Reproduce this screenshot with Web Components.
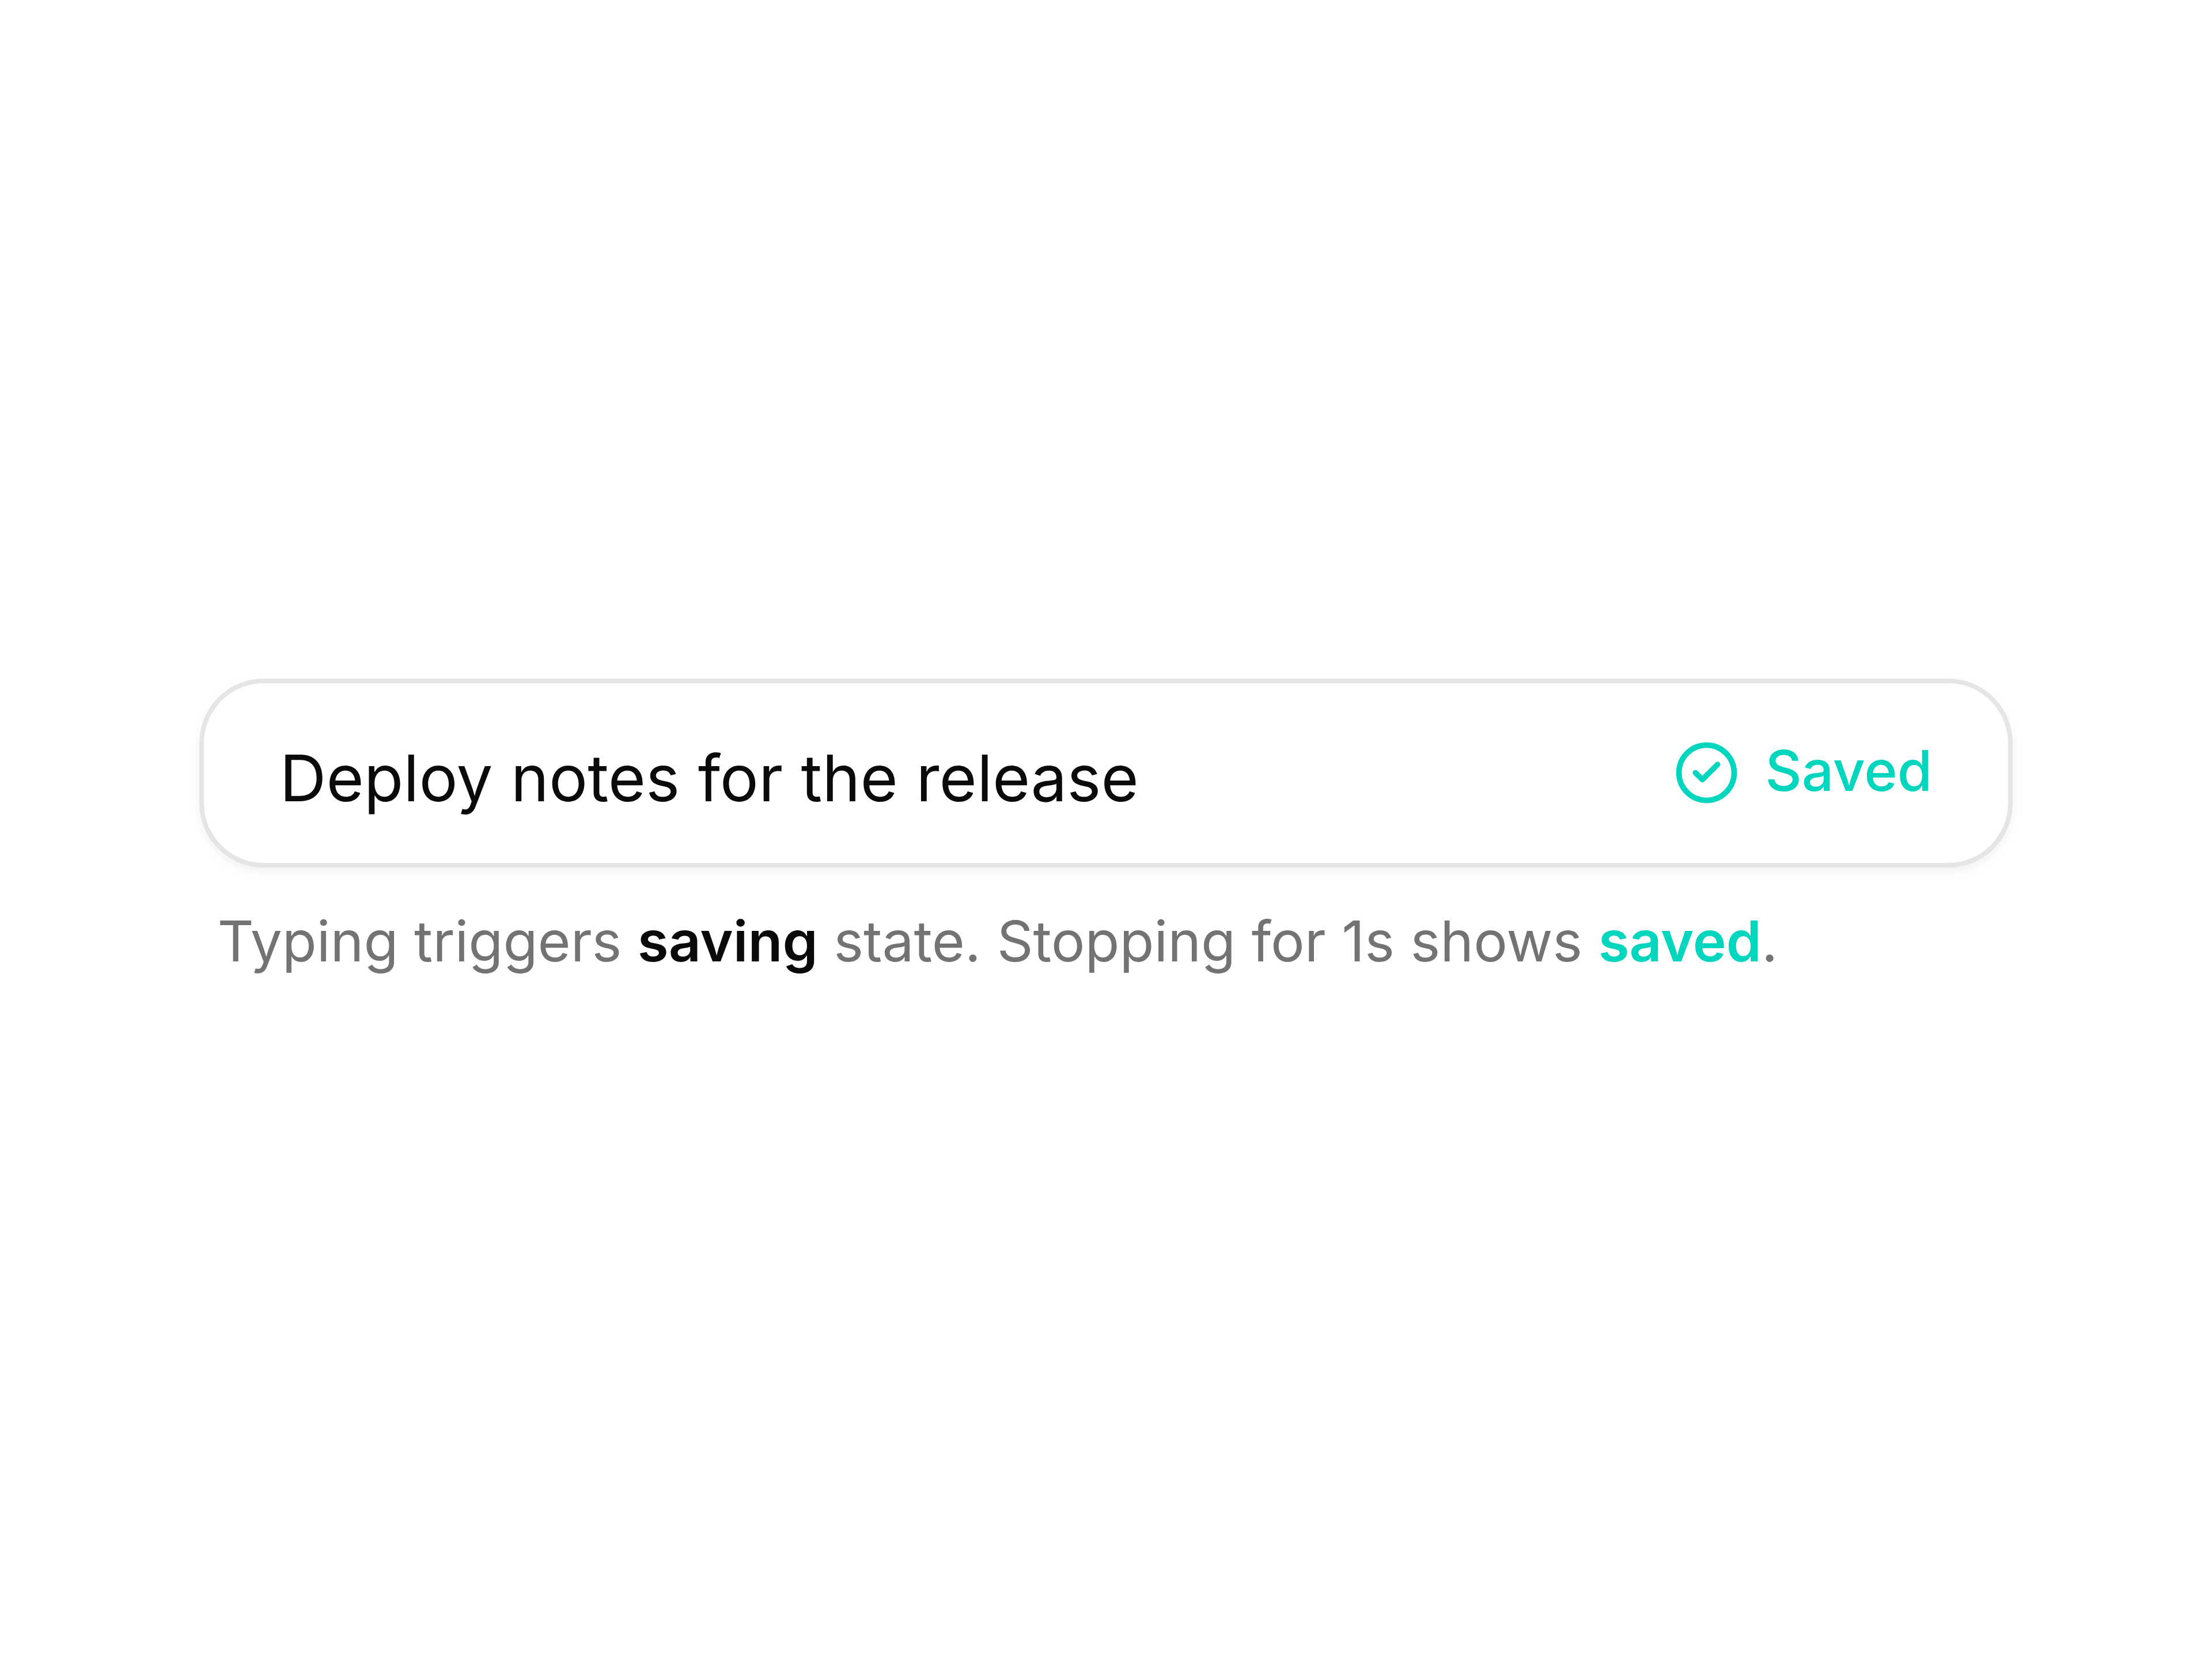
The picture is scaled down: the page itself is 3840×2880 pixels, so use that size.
<!DOCTYPE html>
<html lang="en">
<head>
<meta charset="utf-8">
<title>Autosave field</title>
<style>
  body {
    margin: 0;
    min-height: 100vh;
    display: grid;
    align-items: center;
    background: #fff;
    color: #0a0a0a;
    font-family: Inter, "Liberation Sans", sans-serif;
  }
</style>
</head>
<body>
<autosave-demo></autosave-demo>
<script>
  class SaveStatus extends HTMLElement {
    constructor() {
      super();
      this.attachShadow({ mode: "open" }).innerHTML = `
        <style>
          :host { display: flex; align-items: flex-start; gap: 44px; color: #00d5be; font-size: 98px; line-height: 108px; font-weight: 500; }
          svg { display: block; width: 115px; height: 115px; }
        </style>
        <svg viewBox="0 0 24 24" fill="none" stroke="currentColor" stroke-width="2" stroke-linecap="round" stroke-linejoin="round" aria-hidden="true">
          <circle cx="12" cy="12" r="10"/><path d="M8 12l2.5 2.5L16 9"/>
        </svg>
        <span role="status"><slot></slot></span>`;
    }
  }

  class AutosaveField extends HTMLElement {
    constructor() {
      super();
      this.attachShadow({ mode: "open" }).innerHTML = `
        <style>
          :host {
            display: flex; align-items: flex-start; gap: 64px; box-sizing: border-box;
            padding: 98px 132px 82px; border: 8px solid #e5e5e5; border-radius: 112px;
            background: #fff; box-shadow: 0 8px 16px rgb(0 0 0 / 0.05);
          }
          input {
            flex: 1; min-width: 0; height: 132px; padding: 0; border: 0; outline: 0;
            background: none; color: inherit; font: inherit; font-size: 112px;
          }
        </style>
        <input type="text" aria-label="Note">
        <slot name="status"></slot>`;
      this.shadowRoot.querySelector("input").value = this.getAttribute("value");
    }
  }

  class FieldHint extends HTMLElement {
    constructor() {
      super();
      this.attachShadow({ mode: "open" }).innerHTML = `
        <style>
          :host { display: block; padding: 0 32px; color: #737373; font-size: 98px; line-height: 136px; }
          ::slotted(b) { font-weight: 600; color: #0a0a0a; }
          ::slotted(b.ok) { color: #00d5be; }
        </style>
        <slot></slot>`;
    }
  }

  class AutosaveDemo extends HTMLElement {
    constructor() {
      super();
      this.attachShadow({ mode: "open" }).innerHTML = `
        <style>
          :host { display: flex; flex-direction: column; gap: 60px; padding: 0 9%; }
        </style>
        <autosave-field value="Deploy notes for the release">
          <save-status slot="status">Saved</save-status>
        </autosave-field>
        <field-hint>Typing triggers <b>saving</b> state. Stopping for 1s shows <b class="ok">saved</b>.</field-hint>`;
    }
  }

  customElements.define("save-status", SaveStatus);
  customElements.define("autosave-field", AutosaveField);
  customElements.define("field-hint", FieldHint);
  customElements.define("autosave-demo", AutosaveDemo);
</script>
</body>
</html>
